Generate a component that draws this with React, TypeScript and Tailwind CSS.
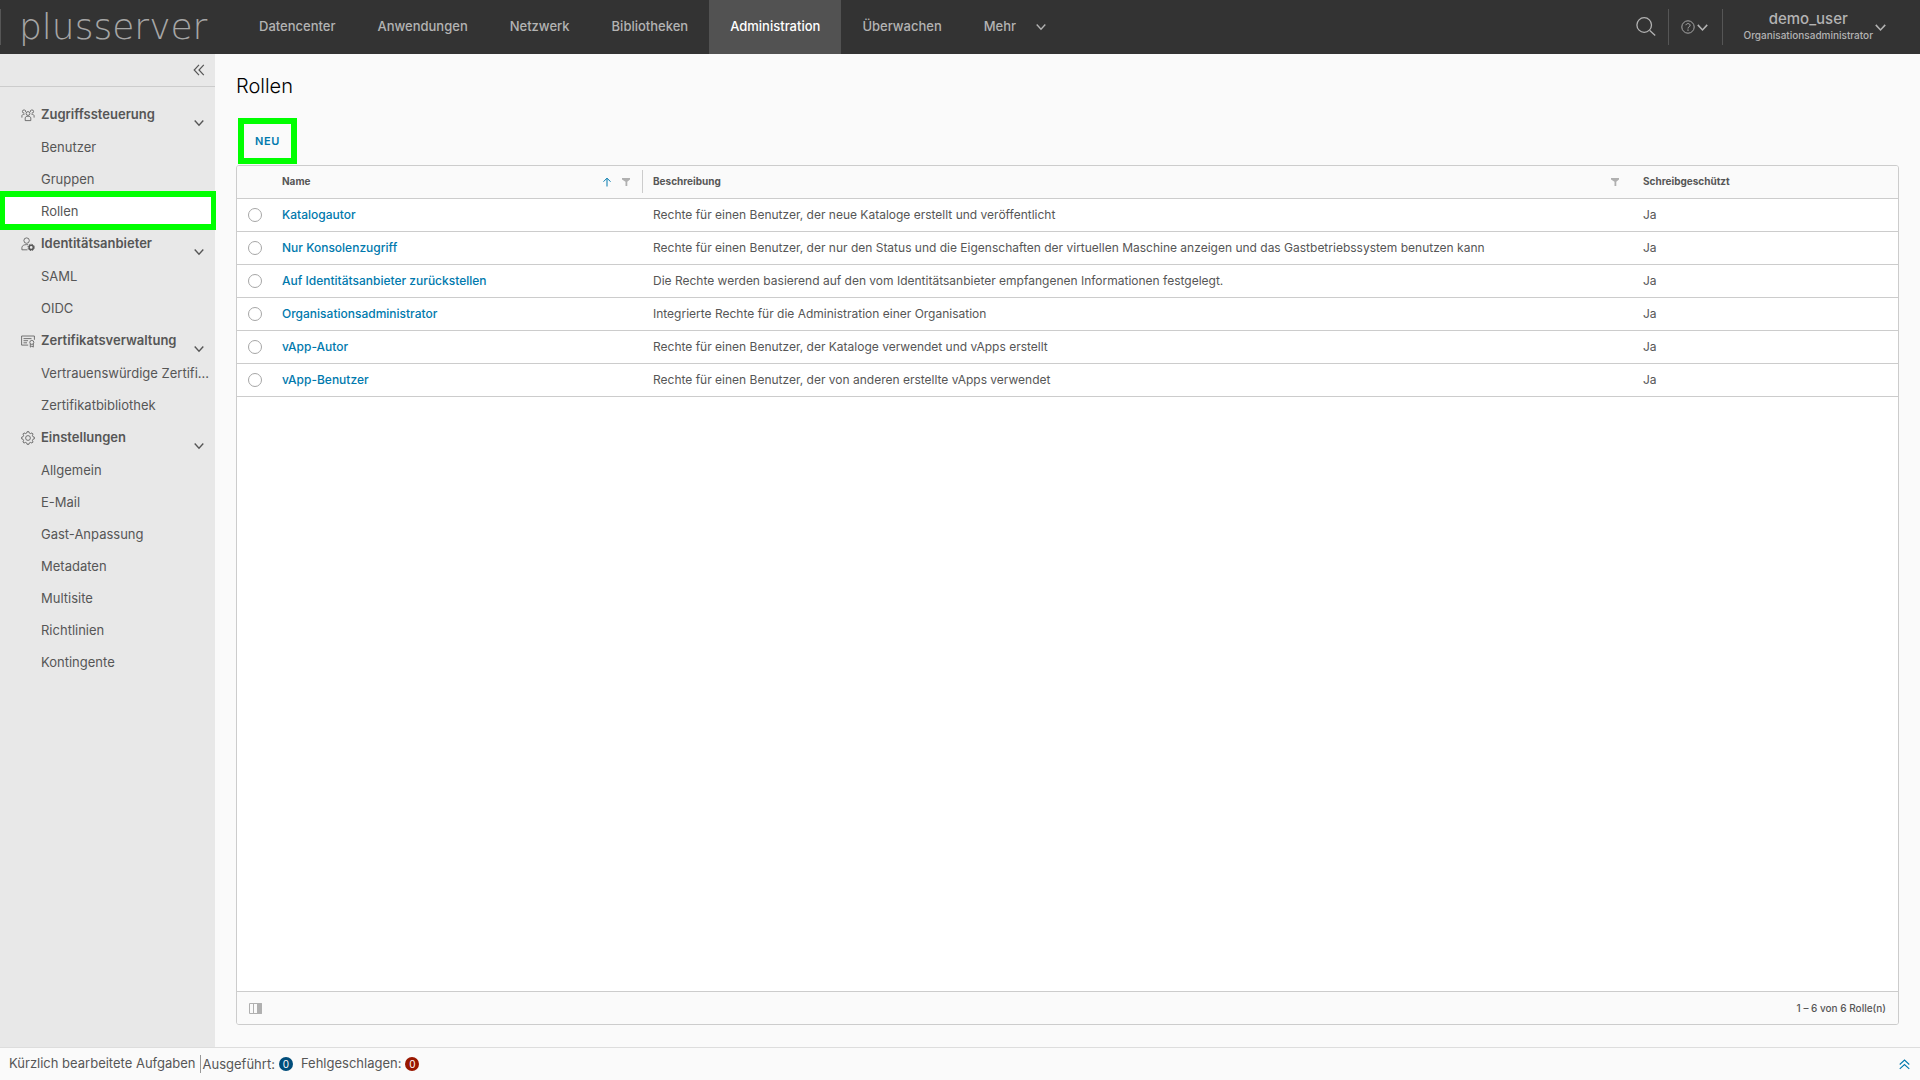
import React from "react";

type IconProps = { className?: string };

const Chevron = ({ className }: IconProps) => (
  <svg viewBox="0 0 10 10" fill="none" stroke="currentColor" strokeWidth="1.4" className={className} aria-hidden="true">
    <path d="M0.7 2.6 5 7.2 9.3 2.6" />
  </svg>
);

const DoubleChevron = ({ className }: IconProps) => (
  <svg viewBox="0 0 12 12" fill="none" stroke="currentColor" strokeWidth="1.2" className={className} aria-hidden="true">
    <path d="M6 0.8 1.2 6 6 11.2M10.8 0.8 6 6l4.8 5.2" />
  </svg>
);

const SearchIcon = ({ className }: IconProps) => (
  <svg viewBox="0 0 20 20" fill="none" stroke="currentColor" strokeWidth="1.3" className={className} aria-hidden="true">
    <circle cx="8.2" cy="8" r="7.3" />
    <path d="m13.8 13.6 5.4 4.9" />
  </svg>
);

const HelpIcon = ({ className }: IconProps) => (
  <svg viewBox="0 0 14 14" fill="none" stroke="currentColor" strokeWidth="0.9" className={className} aria-hidden="true">
    <circle cx="7" cy="7" r="6.2" />
    <path d="M4.9 5.2c.2-1 1-1.6 2.1-1.6 1.2 0 2.1.7 2.1 1.7C9.1 6.9 7 6.700 7 8.500" />
    <path d="M7 9.600v1.100" strokeWidth="1.1" />
  </svg>
);

const UsersIcon = ({ className }: IconProps) => (
  <svg viewBox="0 0 14 14" fill="none" stroke="currentColor" strokeWidth="0.8" className={className} aria-hidden="true">
    <circle cx="7" cy="5.5" r="1.9" />
    <path d="M4.2 12.6V10c0-1.1 1.2-1.8 2.8-1.8s2.8.7 2.8 1.8v2.6z" />
    <path d="M4.6 3.9A1.6 1.6 0 1 0 3.3 5.1M9.4 3.9a1.6 1.6 0 1 1 1.3 1.2" />
    <path d="M.9 9.6V7.9c0-1 .9-1.6 2.6-1.6M13.1 9.6V7.9c0-1-.9-1.6-2.6-1.6" />
  </svg>
);

const UserGearIcon = ({ className }: IconProps) => (
  <svg viewBox="0 0 14 14" fill="none" stroke="currentColor" strokeWidth="0.8" className={className} aria-hidden="true">
    <circle cx="5.6" cy="3.6" r="2.7" />
    <path d="M6.5 12.8H.9V10.5c0-1.7 2-2.9 4.7-2.9.6 0 1.1 0 1.6.1" />
    <circle cx="10.2" cy="10.4" r="2.1" strokeWidth="1.5" />
    <circle cx="10.2" cy="10.4" r="3.2" strokeWidth="1" strokeDasharray="1.3 1.213" />
  </svg>
);

const CertificateIcon = ({ className }: IconProps) => (
  <svg viewBox="0 0 14 14" fill="none" stroke="currentColor" strokeWidth="0.8" className={className} aria-hidden="true">
    <path d="M7.2 11.1H.6V2h12.8v3.8" />
    <path d="M2.5 4.6h8M2.5 6.7h4.5M2.5 8.8h3.5" />
    <circle cx="10.8" cy="8.4" r="2" />
    <path d="M9.3 9.9v3.2l1.5-.9 1.5.9V9.9" />
  </svg>
);

const GearIcon = ({ className }: IconProps) => (
  <svg viewBox="0 0 14 14" fill="none" stroke="currentColor" strokeWidth="0.8" className={className} aria-hidden="true">
    <path d="M5.8 2 6.2.6h1.6L8.2 2l1.5.6 1.3-.7 1.1 1.1-.7 1.3.6 1.5 1.4.4v1.6l-1.4.4-.6 1.5.7 1.3-1.1 1.1-1.3-.7-1.5.6-.4 1.4H6.2L5.8 12l-1.5-.6-1.3.7L1.900 11l.7-1.300L2 8.200.6 7.800V6.200L2 5.800l.6-1.500L1.900 3 3 1.900l1.300.7z" />
    <circle cx="7" cy="7" r="2.4" />
  </svg>
);

const ArrowUp = ({ className }: IconProps) => (
  <svg viewBox="0 0 10 10" fill="none" stroke="currentColor" className={className} aria-hidden="true">
    <path d="M5 9.5V1.2M1.5 4.7 5 1.2l3.5 3.5" />
  </svg>
);

const FilterIcon = ({ className }: IconProps) => (
  <svg viewBox="0 0 10 10" fill="currentColor" className={className} aria-hidden="true">
    <path d="M1 1h8v1.4L6.3 4.8V9H4.500V4.800L1 2.400z" />
  </svg>
);

const ColumnsIcon = ({ className }: IconProps) => (
  <svg viewBox="0 0 13 11" fill="none" stroke="currentColor" className={className} aria-hidden="true">
    <path d="M.5.5h12v10H.5zM4.5.5v10" />
    <path d="M8.5.5h4v10h-4z" fill="currentColor" />
  </svg>
);

const tabs = ["Datencenter", "Anwendungen", "Netzwerk", "Bibliotheken", "Administration", "Überwachen"];

const menu = [
  { title: "Zugriffssteuerung", Icon: UsersIcon, items: ["Benutzer", "Gruppen", "Rollen"] },
  { title: "Identitätsanbieter", Icon: UserGearIcon, items: ["SAML", "OIDC"] },
  {
    title: "Zertifikatsverwaltung",
    Icon: CertificateIcon,
    items: ["Vertrauenswürdige Zertifi...", "Zertifikatbibliothek"],
  },
  {
    title: "Einstellungen",
    Icon: GearIcon,
    items: ["Allgemein", "E-Mail", "Gast-Anpassung", "Metadaten", "Multisite", "Richtlinien", "Kontingente"],
  },
];

const roles = [
  { name: "Katalogautor", description: "Rechte für einen Benutzer, der neue Kataloge erstellt und veröffentlicht" },
  {
    name: "Nur Konsolenzugriff",
    description:
      "Rechte für einen Benutzer, der nur den Status und die Eigenschaften der virtuellen Maschine anzeigen und das Gastbetriebssystem benutzen kann",
  },
  {
    name: "Auf Identitätsanbieter zurückstellen",
    description: "Die Rechte werden basierend auf den vom Identitätsanbieter empfangenen Informationen festgelegt.",
  },
  { name: "Organisationsadministrator", description: "Integrierte Rechte für die Administration einer Organisation" },
  { name: "vApp-Autor", description: "Rechte für einen Benutzer, der Kataloge verwendet und vApps erstellt" },
  { name: "vApp-Benutzer", description: "Rechte für einen Benutzer, der von anderen erstellte vApps verwendet" },
];

const Header = () => (
  <header className="flex h-[54px] items-center bg-[#333333] text-[#b3b3b3]">
    <div className="flex h-9 w-[238px] shrink-0 items-center border-l border-[#565656] pl-[18px]">
      <a href="#" className="font-['DejaVu_Sans',sans-serif] text-[36px] leading-9 font-extralight text-[#a6a6a6]">
        plusserver
      </a>
    </div>
    <nav className="flex h-full text-[13px] font-medium">
      {tabs.map((tab) => (
        <a
          key={tab}
          href="#"
          className={
            tab === "Administration"
              ? "flex items-center bg-[#525252] px-[21px] text-white"
              : "flex items-center px-[21px]"
          }
        >
          {tab}
        </a>
      ))}
      <button type="button" className="flex items-center gap-5 px-[21px]">
        Mehr
        <Chevron className="size-[10px]" />
      </button>
    </nav>
    <div className="ml-auto flex h-9 items-center">
      <button type="button" aria-label="Suchen" className="px-3">
        <SearchIcon className="size-5" />
      </button>
      <button
        type="button"
        aria-label="Hilfe"
        className="flex h-full w-[55px] items-center gap-0.5 border-x border-[#565656] pl-3"
      >
        <HelpIcon className="size-[14px]" />
        <Chevron className="size-[11px]" />
      </button>
      <button type="button" className="flex items-center gap-0.5 pr-[34px] pl-[21px]">
        <span className="flex flex-col items-center">
          <span className="text-[15px] leading-4 font-medium">demo_user</span>
          <span className="text-[10px] leading-4 font-medium">Organisationsadministrator</span>
        </span>
        <Chevron className="size-[11px]" />
      </button>
    </div>
  </header>
);

const Sidebar = () => (
  <aside className="w-[215px] shrink-0 bg-[#e8e8e8]">
    <div className="flex h-[33px] items-center justify-end border-b border-[#cccccc] pr-[10px]">
      <button type="button" aria-label="Einklappen">
        <DoubleChevron className="size-3" />
      </button>
    </div>
    <nav className="flex flex-col gap-px pt-3 text-[13px]">
      {menu.map(({ title, Icon, items }) => (
        <div key={title}>
          <button type="button" className="flex h-8 w-full items-center pr-[11px] pl-[21px] font-semibold">
            <Icon className="mr-1.5 size-[14px]" />
            {title}
            <Chevron className="mt-4 ml-auto size-[10px]" />
          </button>
          <ul>
            {items.map((item) => (
              <li key={item} className={item === "Rollen" ? "relative bg-white" : ""}>
                <a href="#" className="block pl-[41px] leading-8 whitespace-nowrap">
                  {item}
                </a>
                {item === "Rollen" && (
                  <span className="pointer-events-none absolute -top-1 -right-px -bottom-[3px] left-0 border-x-[5px] border-y-[6px] border-[#00ff00]" />
                )}
              </li>
            ))}
          </ul>
        </div>
      ))}
    </nav>
  </aside>
);

const RolesGrid = () => (
  <section className="flex flex-1 flex-col overflow-hidden rounded-[3px] border border-[#cccccc] bg-white">
    <table className="w-full table-fixed text-left text-[12px]">
      <colgroup>
        <col className="w-9" />
        <col className="w-[370px]" />
        <col />
        <col className="w-[265px]" />
      </colgroup>
      <thead>
        <tr className="h-8 border-b border-[#cccccc] bg-[#fafafa] text-[10px]">
          <th aria-label="Auswahl" />
          <th className="p-0 font-bold">
            <div className="flex h-[23px] items-center border-r border-[#cccccc] pr-[11px] pl-[9px]">
              Name
              <ArrowUp className="mr-[9px] ml-auto size-[10px] text-[#0079ad]" />
              <FilterIcon className="size-[10px] text-[#b0b0b0]" />
            </div>
          </th>
          <th className="p-0 font-bold">
            <div className="flex items-center justify-between pr-[13px] pl-[10px]">
              Beschreibung
              <FilterIcon className="size-[10px] text-[#b0b0b0]" />
            </div>
          </th>
          <th className="px-[10px] font-bold">Schreibgeschützt</th>
        </tr>
      </thead>
      <tbody>
        {roles.map((role) => (
          <tr key={role.name} className="h-[33px] border-b border-[#cccccc]">
            <td className="p-0 pl-[11px]">
              <input
                type="radio"
                name="role"
                aria-label={role.name}
                className="block size-[14px] appearance-none rounded-full border border-[#a6a6a6] bg-white"
              />
            </td>
            <td className="px-[9px]">
              <a href="#" className="font-medium text-[#0079ad]">
                {role.name}
              </a>
            </td>
            <td className="px-[10px]">{role.description}</td>
            <td className="px-[10px]">Ja</td>
          </tr>
        ))}
      </tbody>
    </table>
    <footer className="mt-auto flex h-[33px] items-center justify-between border-t border-[#cccccc] bg-[#fafafa] px-3 text-[10px] font-medium">
      <button type="button" aria-label="Spalten verwalten">
        <ColumnsIcon className="h-[11px] w-[13px] text-[#b0b0b0]" />
      </button>
      <span>1 – 6 von 6 Rolle(n)</span>
    </footer>
  </section>
);

const TaskBar = () => (
  <footer className="flex h-[33px] items-center border-t border-[#dddddd] pr-[10px] pl-[9px] text-[13px]">
    <span className="pr-1">Kürzlich bearbeitete Aufgaben</span>
    <span className="mr-2 flex items-center gap-1">
      <span className="border-l border-[#999999] pl-0.5 leading-[18px]">Ausgeführt:</span>
      <span className="size-[14px] rounded-full bg-[#004d7a] text-center text-[10px] leading-[14px] text-white">0</span>
    </span>
    <span className="flex items-center gap-1">
      Fehlgeschlagen:
      <span className="size-[14px] rounded-full bg-[#991700] text-center text-[10px] leading-[14px] text-white">0</span>
    </span>
    <button type="button" aria-label="Ausklappen" className="ml-auto text-[#0079ad]">
      <DoubleChevron className="size-[11px] rotate-90" />
    </button>
  </footer>
);

const App = () => {
  return (
    <div className="flex min-h-screen flex-col bg-[#fafafa] font-[Inter,sans-serif] text-[#565656]">
      <Header />
      <div className="flex flex-1">
        <Sidebar />
        <main className="flex min-w-0 flex-1 flex-col pt-5 pr-[21px] pb-[22px] pl-[21px]">
          <h1 className="text-[20px] leading-6 font-light text-black">Rollen</h1>
          <div className="mt-5 mb-px pl-0.5">
            <button
              type="button"
              className="h-[46px] w-[59px] border-[6px] border-[#00ff00] text-[11px] font-semibold tracking-wider text-[#0079ad]"
            >
              NEU
            </button>
          </div>
          <RolesGrid />
        </main>
      </div>
      <TaskBar />
    </div>
  );
};

export default App;
